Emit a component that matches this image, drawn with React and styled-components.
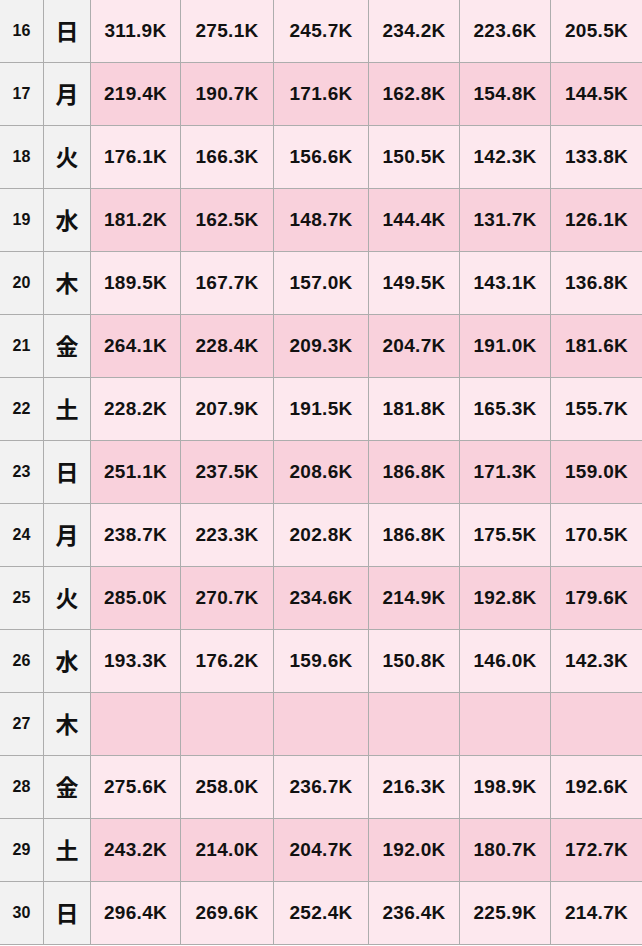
import React from 'react';
import styled, { createGlobalStyle } from 'styled-components';

const GlobalStyle = createGlobalStyle`
    html, body {
        margin: 0;
        padding: 0;
        background: #ffffff;
        overflow: hidden;
    }
`;

const Table = styled.div`
    width: 642px;
    font-family: "Liberation Sans", "Noto Sans CJK JP", Arial, sans-serif;
    font-weight: bold;
    color: #111;
`;

const Row = styled.div`
    display: grid;
    grid-template-columns: 44px 47px 90px 93px 95px 91px 91px 91px;
    height: 63px;
`;

const Cell = styled.div`
    box-sizing: border-box;
    display: flex;
    align-items: center;
    justify-content: center;
    border-bottom: 1px solid #adadad;
    border-right: 1px solid #adadad;
    background: ${({ $shade }) => ($shade ? '#f9d1dc' : '#fde8ee')};
    font-size: 19px;
    letter-spacing: 0.3px;
    &:last-child {
        border-right: none;
    }
`;

const DayCell = styled(Cell)`
    background: #f2f2f2;
    font-size: 16px;
    letter-spacing: 0;
`;

const WeekdayCell = styled(Cell)`
    background: #f2f2f2;
    font-family: "Noto Sans CJK JP", sans-serif;
    font-size: 23px;
    letter-spacing: 0;
    padding-bottom: 3px;
`;

const rows = [
    [16, '日', ['311.9K', '275.1K', '245.7K', '234.2K', '223.6K', '205.5K']],
    [17, '月', ['219.4K', '190.7K', '171.6K', '162.8K', '154.8K', '144.5K']],
    [18, '火', ['176.1K', '166.3K', '156.6K', '150.5K', '142.3K', '133.8K']],
    [19, '水', ['181.2K', '162.5K', '148.7K', '144.4K', '131.7K', '126.1K']],
    [20, '木', ['189.5K', '167.7K', '157.0K', '149.5K', '143.1K', '136.8K']],
    [21, '金', ['264.1K', '228.4K', '209.3K', '204.7K', '191.0K', '181.6K']],
    [22, '土', ['228.2K', '207.9K', '191.5K', '181.8K', '165.3K', '155.7K']],
    [23, '日', ['251.1K', '237.5K', '208.6K', '186.8K', '171.3K', '159.0K']],
    [24, '月', ['238.7K', '223.3K', '202.8K', '186.8K', '175.5K', '170.5K']],
    [25, '火', ['285.0K', '270.7K', '234.6K', '214.9K', '192.8K', '179.6K']],
    [26, '水', ['193.3K', '176.2K', '159.6K', '150.8K', '146.0K', '142.3K']],
    [27, '木', ['', '', '', '', '', '']],
    [28, '金', ['275.6K', '258.0K', '236.7K', '216.3K', '198.9K', '192.6K']],
    [29, '土', ['243.2K', '214.0K', '204.7K', '192.0K', '180.7K', '172.7K']],
    [30, '日', ['296.4K', '269.6K', '252.4K', '236.4K', '225.9K', '214.7K']],
];

export default function App() {
    return (
        <>
            <GlobalStyle />
            <Table>
                {rows.map(([day, weekday, values]) => (
                    <Row key={day}>
                        <DayCell>{day}</DayCell>
                        <WeekdayCell>{weekday}</WeekdayCell>
                        {values.map((v, i) => (
                            <Cell key={i} $shade={day % 2 === 1}>{v}</Cell>
                        ))}
                    </Row>
                ))}
            </Table>
        </>
    );
}
